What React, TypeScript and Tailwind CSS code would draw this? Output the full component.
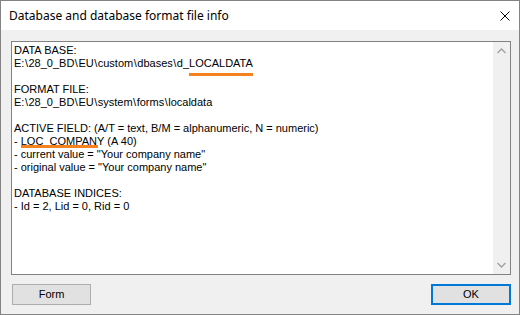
import React from 'react';

function Mark({ children, top, width }: { children: React.ReactNode; top: string; width?: string }) {
  return (
    <span className="relative">
      {children}
      <span className={`absolute left-0 h-[3px] bg-[#f5821f] ${top} ${width ?? 'right-0'}`} />
    </span>
  );
}

// Backslashes are a little wider in the original dialog font
function Path({ text }: { text: string }) {
  const parts = text.split('\\');
  return (
    <>
      {parts.map((p, i) => (
        <React.Fragment key={i}>
          {p}
          {i < parts.length - 1 && <span className="px-[0.5px]">\</span>}
        </React.Fragment>
      ))}
    </>
  );
}

export default function App() {
  return (
    <div className="w-[520px] h-[315px] flex flex-col border border-[#838383] bg-[#f0f0f0] text-black" style={{ fontFamily: '"Liberation Sans", Arial, sans-serif' }}>
      {/* Title bar */}
      <div className="h-[29px] shrink-0 bg-white flex items-center justify-between pl-[8px] pr-[9px]">
        <span className="text-[12px]" style={{ fontFamily: '"Noto Sans", sans-serif' }}>Database and database format file info</span>
        <svg width="10" height="10" viewBox="0 0 10 10" className="mt-[1px]">
          <path d="M0.5 0.5 L9.5 9.5 M9.5 0.5 L0.5 9.5" stroke="#000" strokeWidth="1" />
        </svg>
      </div>

      {/* Body */}
      <div className="flex-1 flex flex-col pt-[11px]">
        <div className="ml-[10px] w-[500px] h-[234px] border border-[#828282] bg-white flex">
          <div className="flex-1 pl-[2px] pt-[2px] text-[11px] leading-[13px] whitespace-pre">
            <div>DATA BASE:</div>
            <div><Path text="E:\28_0_BD\EU\custom\dbases\d_" /><Mark top="top-[16px]">LOCALDATA</Mark></div>
            <div>&nbsp;</div>
            <div>FORMAT FILE:</div>
            <div><Path text="E:\28_0_BD\EU\system\forms\localdata" /></div>
            <div>&nbsp;</div>
            <div>ACTIVE FIELD: (A/T = text, B/M = alphanumeric, N = numeric)</div>
            <div>- <Mark top="top-[10px]" width="w-[77px]">LOC_COMPANY</Mark> (A 40)</div>
            <div>- current value = "Your company name"</div>
            <div>- original value = "Your company name"</div>
            <div>&nbsp;</div>
            <div>DATABASE INDICES:</div>
            <div>- Id = 2, Lid = 0, Rid = 0</div>
          </div>
          {/* Scrollbar (disabled) */}
          <div className="w-[17px] bg-[#f0f0f0] flex flex-col justify-between items-center pt-[6px] pb-[6px]">
            <svg width="9" height="6" viewBox="0 0 9 6">
              <path d="M0.5 5 L4.5 1 L8.5 5" stroke="#a3a3a3" strokeWidth="1.5" fill="none" />
            </svg>
            <svg width="9" height="6" viewBox="0 0 9 6">
              <path d="M0.5 1 L4.5 5 L8.5 1" stroke="#a3a3a3" strokeWidth="1.5" fill="none" />
            </svg>
          </div>
        </div>

        <div className="mt-[9px] flex justify-between ml-[11px] mr-[8px]">
          <button className="w-[79px] h-[21px] bg-[#e1e1e1] border border-[#adadad] text-[11px]">Form</button>
          <button className="w-[80px] h-[21px] bg-[#e1e1e1] border-2 border-[#0078d7] text-[11px]">OK</button>
        </div>
      </div>
    </div>
  );
}
